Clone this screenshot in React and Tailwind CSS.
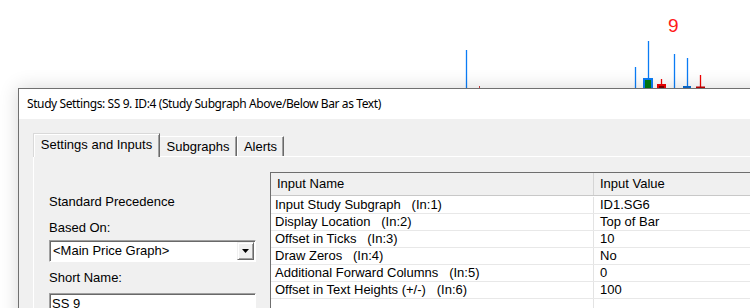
const rows = [
  ["Input Study Subgraph   (In:1)", "ID1.SG6"],
  ["Display Location   (In:2)", "Top of Bar"],
  ["Offset in Ticks   (In:3)", "10"],
  ["Draw Zeros   (In:4)", "No"],
  ["Additional Forward Columns   (In:5)", "0"],
  ["Offset in Text Heights (+/-)   (In:6)", "100"],
];

function Chart() {
  return (
    <svg className="absolute left-0 top-0" width="750" height="308" viewBox="0 0 750 308">
      <g stroke="#0a7cf5" strokeWidth="1.3">
        <line x1="466.5" y1="50" x2="466.5" y2="88" />
        <line x1="635.5" y1="67" x2="635.5" y2="88" />
        <line x1="648.5" y1="41" x2="648.5" y2="78" />
        <line x1="674.5" y1="54" x2="674.5" y2="88" />
        <line x1="687.5" y1="58" x2="687.5" y2="88" />
      </g>
      <rect x="644" y="79" width="8" height="10" fill="#007a10" stroke="#0a7cf5" strokeWidth="2" />
      <line x1="661.5" y1="79" x2="661.5" y2="84" stroke="#f00000" strokeWidth="1.3" />
      <rect x="658" y="85" width="7" height="4" fill="#7a0000" stroke="#f00000" strokeWidth="2" />
      <rect x="683" y="86" width="8" height="2" fill="#0a6ad0" />
      <line x1="700.5" y1="75" x2="700.5" y2="88" stroke="#f00000" strokeWidth="1.3" />
      <rect x="696" y="86.5" width="9" height="1.5" fill="#c00000" />
      <rect x="479" y="86" width="1" height="2" fill="#d04040" />
    </svg>
  );
}

function App() {
  return (
    <div className="relative w-[750px] h-[308px] overflow-hidden bg-white font-['Liberation_Sans',Arial,sans-serif]">
      <Chart />
      <div className="absolute left-[668px] top-[14px] text-[19px] leading-[24px] text-[#ff1a1a]">9</div>
      <div className="absolute left-[487px] top-[85px] text-[14px] leading-[16px] text-[#c02020]">8</div>

      <div className="absolute left-[18px] top-[88px] w-[760px] h-[240px] border border-[#707070] bg-[#f0f0f0] shadow-[0_0_18px_rgba(0,0,0,0.16)] flex flex-col">
        <div className="h-[30px] bg-white flex items-center pl-[8px] text-[12px] text-black font-['Noto_Sans',sans-serif] tracking-[-0.4px]">
          Study Settings: SS 9. ID:4 (Study Subgraph Above/Below Bar as Text)
        </div>

        <div className="pl-[14px] pt-[14px] flex flex-col flex-1">
          <div className="flex items-end h-[23px] text-[13px] text-black">
            <div className="relative z-10 -mb-[1px] h-[24px] w-[127px] bg-[#f0f0f0] border border-b-0 border-t-[#d9d9d9] border-l-[#d9d9d9] border-r-[#696969] shadow-[inset_1px_1px_0_#ffffff,inset_-1px_0_0_#a0a0a0] flex items-center justify-center pb-[1px]">
              Settings and Inputs
            </div>
            <div className="h-[20px] w-[77px] bg-[#f0f0f0] border-t border-r border-t-white border-r-[#696969] shadow-[inset_-1px_0_0_#a0a0a0] flex items-center justify-center">
              Subgraphs
            </div>
            <div className="h-[20px] w-[47px] bg-[#f0f0f0] border-t border-l border-r border-t-white border-l-white border-r-[#696969] shadow-[inset_-1px_0_0_#a0a0a0] flex items-center justify-center">
              Alerts
            </div>
          </div>

          <div className="flex-1 border-t border-l border-white bg-[#f0f0f0] pl-[15px] pt-[15px] flex">
            <div className="w-[207px] pt-[22px] flex flex-col text-[13px] leading-[16px] text-black">
              <div>Standard Precedence</div>
              <div className="mt-[10px]">Based On:</div>
              <div className="mt-[4px] h-[22px] flex bg-white border border-t-[#a0a0a0] border-l-[#a0a0a0] border-b-white border-r-white shadow-[inset_1px_1px_0_#696969]">
                <div className="flex-1 pl-[3px] flex items-center">&lt;Main Price Graph&gt;</div>
                <div className="w-[17px] my-[1px] mr-[1px] bg-[#f0f0f0] border border-t-[#f0f0f0] border-l-[#f0f0f0] border-b-[#696969] border-r-[#696969] shadow-[inset_1px_1px_0_#ffffff,inset_-1px_-1px_0_#a0a0a0] flex items-center justify-center">
                  <svg width="7" height="4" viewBox="0 0 7 4">
                    <path d="M0 0H7L3.5 4Z" fill="#000" />
                  </svg>
                </div>
              </div>
              <div className="mt-[8px]">Short Name:</div>
              <div className="mt-[7px] h-[22px] bg-white border border-t-[#a0a0a0] border-l-[#a0a0a0] border-b-white border-r-white shadow-[inset_1px_1px_0_#696969] pl-[2px] pt-[2px]">
                SS 9
              </div>
            </div>

            <div className="ml-[14px] w-[500px] bg-white border-t border-l border-[#6e6e6e] text-[13px] text-black">
              <div className="flex h-[23px] bg-[#f0f0f0] border-b border-[#c8c8c8] shadow-[0_1px_0_#ffffff]">
                <div className="w-[323px] border-r border-[#d5d5d5] pl-[6px] flex items-center">Input Name</div>
                <div className="flex-1 pl-[6px] flex items-center">Input Value</div>
              </div>
              <div className="mt-[1px]">
                {rows.map(([name, value]) => (
                  <div key={name} className="flex h-[17px] border-b border-[#e8e8e8]">
                    <div className="w-[323px] border-r border-[#e3e3e3] pl-[4px] whitespace-pre leading-[16px]">{name}</div>
                    <div className="flex-1 pl-[6px] leading-[16px]">{value}</div>
                  </div>
                ))}
                <div className="flex h-[17px]">
                  <div className="w-[323px] border-r border-[#e3e3e3]" />
                </div>
              </div>
            </div>
          </div>
        </div>
      </div>
    </div>
  );
}

export default App;
